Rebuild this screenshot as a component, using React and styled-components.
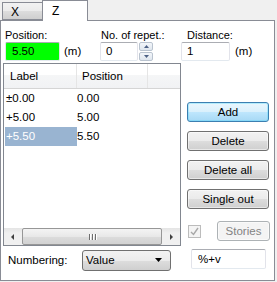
import React from "react";
import styled, { createGlobalStyle } from "styled-components";

const Global = createGlobalStyle`
  html, body { margin: 0; padding: 0; background: #f0f0f0; }
  body { font-family: "Liberation Sans", Arial, sans-serif; font-size: 11px; color: #000; }
  * { box-sizing: border-box; }
`;

const Window = styled.div`
  width: 277px;
  height: 282px;
  background: #f0f0f0;
`;

const TabStrip = styled.div`
  display: flex;
  align-items: flex-end;
  height: 20px;
  padding-left: 2px;
`;

const Tab = styled.div`
  position: relative;
  z-index: ${(p) => (p.$active ? 1 : 0)};
  height: ${(p) => (p.$active ? "21px" : "18px")};
  width: ${(p) => p.$w}px;
  margin-bottom: ${(p) => (p.$active ? "-1px" : "0")};
  margin-left: ${(p) => (p.$active ? "-1px" : "0")};
  border: 1px solid #898c95;
  border-bottom: ${(p) => (p.$active ? "none" : "1px solid #898c95")};
  background: ${(p) => (p.$active ? "#fff" : "linear-gradient(#f2f2f2, #ebebeb 50%, #dddddd 51%, #cfcfcf)")};
  padding-left: ${(p) => (p.$active ? "9px" : "8px")};
  padding-top: ${(p) => (p.$active ? "3px" : "2px")};
  font-size: 12px;
`;

const Panel = styled.div`
  width: 275px;
  height: 261px;
  border: 1px solid #898c95;
  background: #fff;
  display: flex;
  flex-direction: column;
`;

const FieldsRow = styled.div`
  display: grid;
  grid-template-columns: 95px 81px 1fr;
  padding: 8px 0 0 4px;
`;

const Field = styled.div`
  display: flex;
  flex-direction: column;
`;

const FieldLabel = styled.div`
  height: 13px;
  line-height: 13px;
  padding-left: ${(p) => p.$indent || 0}px;
`;

const InputLine = styled.div`
  display: flex;
  align-items: center;
  gap: ${(p) => p.$gap || 4}px;
`;

const TextBox = styled.div`
  width: ${(p) => p.$w}px;
  height: ${(p) => p.$h || 19}px;
  border: 1px solid #abadb3;
  border-left-color: #e2e3ea;
  border-right-color: #e2e3ea;
  border-bottom-color: #e3e9ef;
  border-radius: 2px;
  background: ${(p) => p.$bg || "#fff"};
  padding-left: ${(p) => p.$pad || 4}px;
  line-height: ${(p) => (p.$h || 19) - 2}px;
  font-size: 11.5px;
  color: ${(p) => p.$color || "#000"};
`;

const Unit = styled.span`
  line-height: 19px;
  font-size: 11.5px;
`;

const Spinner = styled.div`
  display: flex;
  flex-direction: column;
  gap: 1px;
  width: 14px;
  height: 19px;
`;

const SpinBtn = styled.div`
  flex: 1;
  border: 1px solid #b9c3cf;
  border-radius: 2px;
  background: linear-gradient(#f3f6fa, #dfe6ee);
  display: flex;
  align-items: center;
  justify-content: center;
`;

const Body = styled.div`
  display: flex;
  padding-left: 2px;
  margin-top: 2px;
`;

const LeftCol = styled.div`
  width: 178px;
  display: flex;
  flex-direction: column;
`;

const List = styled.div`
  height: 183px;
  border: 1px solid #828790;
  display: flex;
  flex-direction: column;
  background: #fff;
`;

const HeaderRow = styled.div`
  display: flex;
  height: 25px;
  border-bottom: 1px solid #d5d5d5;
  background: linear-gradient(#ffffff, #ffffff 45%, #f5f6f7 46%, #f1f2f4);
`;

const HeaderCell = styled.div`
  width: ${(p) => (p.$w ? `${p.$w}px` : "auto")};
  flex: ${(p) => (p.$w ? "none" : "1")};
  border-right: ${(p) => (p.$w ? "1px solid #e5e5e5" : "none")};
  padding-left: ${(p) => p.$pad || 0}px;
  line-height: 24px;
  font-size: 11.5px;
`;

const Row = styled.div`
  display: flex;
  height: 19px;
  line-height: 19px;
  font-size: 11.5px;
`;

const Cell = styled.div`
  width: ${(p) => p.$w}px;
  margin-left: ${(p) => p.$ml || 0}px;
  padding-left: ${(p) => p.$pad || 0}px;
  background: ${(p) => (p.$sel ? "#99b4d1" : "transparent")};
  color: ${(p) => (p.$sel ? "#fff" : "#000")};
`;

const Spacer = styled.div`
  flex: 1;
`;

const HScroll = styled.div`
  height: 17px;
  display: flex;
  align-items: stretch;
  background: linear-gradient(#e4e4e4, #f0f0f0 30%, #f0f0f0);
`;

const ArrowBtn = styled.div`
  width: 17px;
  display: flex;
  align-items: center;
  justify-content: center;
`;

const Thumb = styled.div`
  flex: 1;
  margin: 0 1px;
  border: 1px solid #979797;
  border-radius: 2px;
  background: linear-gradient(#f4f4f4, #e8e8e8 50%, #dcdcdc 51%, #d2d2d2);
  display: flex;
  align-items: center;
  justify-content: center;
  gap: 2px;
`;

const Grip = styled.div`
  width: 1px;
  height: 6px;
  background: #6e6e6e;
  box-shadow: 1px 0 0 #fff;
`;

const NumberingRow = styled.div`
  display: flex;
  align-items: center;
  margin-top: 4px;
  height: 20px;
`;

const NumLabel = styled.div`
  width: 79px;
  padding-left: 5px;
  font-size: 11.5px;
`;

const Select = styled.div`
  width: 89px;
  height: 21px;
  border: 1px solid #707070;
  border-radius: 3px;
  background: linear-gradient(#f2f2f2, #ebebeb 50%, #dddddd 51%, #cfcfcf);
  display: flex;
  align-items: center;
  justify-content: space-between;
  padding: 0 8px 0 3px;
  font-size: 11.5px;
`;

const RightCol = styled.div`
  display: flex;
  flex-direction: column;
  margin-left: 6px;
  padding-top: 39px;
`;

const Button = styled.div`
  width: ${(p) => p.$w || 82}px;
  height: 20px;
  margin-top: ${(p) => p.$mt || 0}px;
  border: 1px solid ${(p) => (p.$default ? "#3c7fb1" : p.$disabled ? "#adb2b5" : "#707070")};
  border-radius: 3px;
  background: ${(p) =>
    p.$default
      ? "linear-gradient(#eaf6fd, #d9f0fc 50%, #bee6fd 51%, #a7d9f5)"
      : p.$disabled
      ? "#f4f4f4"
      : "linear-gradient(#f2f2f2, #ebebeb 50%, #dddddd 51%, #cfcfcf)"};
  box-shadow: ${(p) => (p.$default ? "inset 0 0 0 1px #48d8fb55" : "inset 0 0 0 1px #ffffff80")};
  color: ${(p) => (p.$disabled ? "#838383" : "#000")};
  display: flex;
  align-items: center;
  justify-content: center;
  font-size: 11.5px;
`;

const StoriesRow = styled.div`
  display: flex;
  align-items: center;
  margin-top: 12px;
  height: 20px;
`;

const CheckBox = styled.div`
  width: 13px;
  height: 13px;
  margin-left: 1px;
  margin-right: 16px;
  border: 1px solid #bcbcbc;
  background: #f4f4f4;
  display: flex;
  align-items: center;
  justify-content: center;
`;

const PatternBox = styled(TextBox)`
  margin-top: 8px;
  margin-left: 4px;
`;

const Tri = ({ dir, color = "#4d6185", w = 5, h = 3 }) => {
  let pts;
  if (dir === "up") pts = `0,${h} ${w / 2},0 ${w},${h}`;
  else if (dir === "down") pts = `0,0 ${w / 2},${h} ${w},0`;
  else if (dir === "left") pts = `${w},0 0,${h / 2} ${w},${h}`;
  else pts = `0,0 ${w},${h / 2} 0,${h}`;
  return (
    <svg width={w} height={h} viewBox={`0 0 ${w} ${h}`}>
      <polygon points={pts} fill={color} />
    </svg>
  );
};

const rows = [
  { label: "±0.00", pos: "0.00" },
  { label: "+5.00", pos: "5.00" },
  { label: "+5.50", pos: "5.50", sel: true },
];

export default function App() {
  return (
    <>
      <Global />
      <Window>
        <TabStrip>
          <Tab $w={41}>X</Tab>
          <Tab $w={46} $active>Z</Tab>
        </TabStrip>
        <Panel>
          <FieldsRow>
            <Field>
              <FieldLabel>Position:</FieldLabel>
              <InputLine $gap={4}>
                <TextBox $w={55} $bg="#00ff00" $pad={6}>5.50</TextBox>
                <Unit>(m)</Unit>
              </InputLine>
            </Field>
            <Field>
              <FieldLabel $indent={1}>No. of repet.:</FieldLabel>
              <InputLine $gap={1}>
                <TextBox $w={38} $pad={5}>0</TextBox>
                <Spinner>
                  <SpinBtn><Tri dir="up" /></SpinBtn>
                  <SpinBtn><Tri dir="down" /></SpinBtn>
                </Spinner>
              </InputLine>
            </Field>
            <Field>
              <FieldLabel $indent={6}>Distance:</FieldLabel>
              <InputLine $gap={5}>
                <TextBox $w={49} $pad={5}>1</TextBox>
                <Unit>(m)</Unit>
              </InputLine>
            </Field>
          </FieldsRow>
          <Body>
            <LeftCol>
              <List>
                <HeaderRow>
                  <HeaderCell $w={73} $pad={6}>Label</HeaderCell>
                  <HeaderCell $w={71} $pad={5}>Position</HeaderCell>
                  <HeaderCell />
                </HeaderRow>
                {rows.map((r) => (
                  <Row key={r.label}>
                    <Cell $w={72} $ml={1} $pad={1} $sel={r.sel}>{r.label}</Cell>
                    <Cell $w={71}>{r.pos}</Cell>
                  </Row>
                ))}
                <Spacer />
                <HScroll>
                  <ArrowBtn><Tri dir="left" color="#404040" w={3} h={6} /></ArrowBtn>
                  <Thumb>
                    <Grip />
                    <Grip />
                    <Grip />
                  </Thumb>
                  <ArrowBtn><Tri dir="right" color="#404040" w={3} h={6} /></ArrowBtn>
                </HScroll>
              </List>
              <NumberingRow>
                <NumLabel>Numbering:</NumLabel>
                <Select>
                  <span>Value</span>
                  <Tri dir="down" color="#000" w={7} h={4} />
                </Select>
              </NumberingRow>
            </LeftCol>
            <RightCol>
              <Button $default>Add</Button>
              <Button $mt={9}>Delete</Button>
              <Button $mt={9}>Delete all</Button>
              <Button $mt={9}>Single out</Button>
              <StoriesRow>
                <CheckBox>
                  <svg width="9" height="9" viewBox="0 0 9 9">
                    <path d="M1 5 L3.5 7.5 L8 1" stroke="#a8a8a8" strokeWidth="1.4" fill="none" />
                  </svg>
                </CheckBox>
                <Button $w={53} $disabled>Stories</Button>
              </StoriesRow>
              <PatternBox $w={75} $h={20} $pad={6}>%+v</PatternBox>
            </RightCol>
          </Body>
        </Panel>
      </Window>
    </>
  );
}
